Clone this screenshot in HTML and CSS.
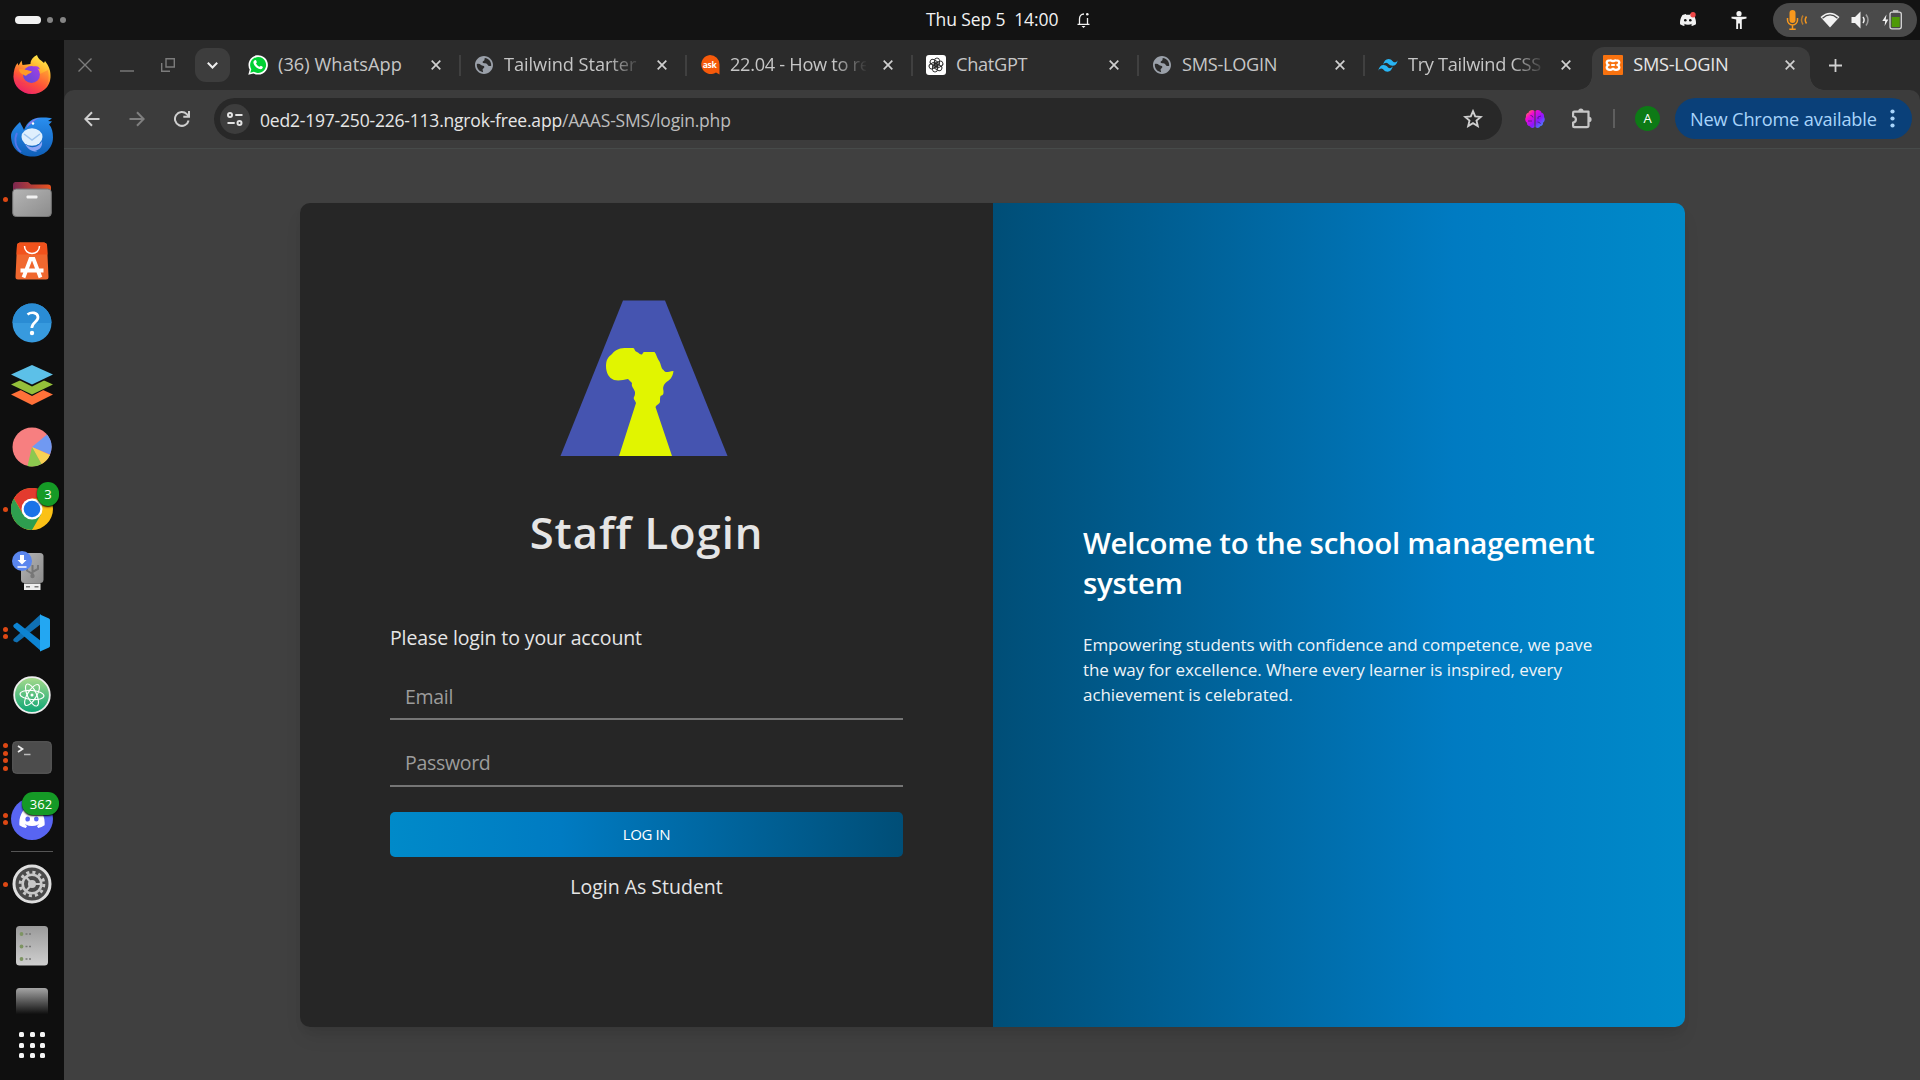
FILE: index.html
```
<!DOCTYPE html>
<html lang="en">
<head>
<meta charset="utf-8">
<title>SMS-LOGIN</title>
<link rel="stylesheet" href="styles.css">
</head>
<body>
<svg class="defs" aria-hidden="true">
  <defs>
    <linearGradient id="ff" x1=".8" y1="0" x2=".3" y2="1"><stop offset="0" stop-color="#fff44f"/><stop offset=".35" stop-color="#ffb02e"/><stop offset=".65" stop-color="#ff5a36"/><stop offset="1" stop-color="#e3117f"/></linearGradient>
    <linearGradient id="ffp" x1="1" y1="0" x2="0" y2="1"><stop offset="0" stop-color="#a63de8"/><stop offset="1" stop-color="#5a4bd0"/></linearGradient>
    <linearGradient id="tb" x1="0" y1="0" x2="0" y2="1"><stop offset="0" stop-color="#2a8ff0"/><stop offset="1" stop-color="#0f5fb8"/></linearGradient>
    <linearGradient id="fo" x1="0" y1="0" x2="1" y2="0"><stop offset="0" stop-color="#7c2750"/><stop offset="1" stop-color="#e95420"/></linearGradient>
    <linearGradient id="gr" x1="0" y1="0" x2="1" y2="1"><stop offset="0" stop-color="#b5b5b5"/><stop offset="1" stop-color="#8c8c8c"/></linearGradient>
    <linearGradient id="pg" x1="0" y1="0" x2="0" y2="1"><stop offset="0" stop-color="#9a9a9a"/><stop offset="1" stop-color="#cfcfcf"/></linearGradient>
    <linearGradient id="at" x1="0" y1="0" x2="0" y2="1"><stop offset="0" stop-color="#a8db8c"/><stop offset="1" stop-color="#0aa574"/></linearGradient>
    <linearGradient id="fade" x1="0" y1="0" x2="0" y2="1"><stop offset="0" stop-color="#a5a5a5"/><stop offset="1" stop-color="#101010"/></linearGradient>
    <linearGradient id="br" x1="0" y1="0" x2="1" y2="1"><stop offset="0" stop-color="#ff9a1f"/><stop offset=".28" stop-color="#f40ad0"/><stop offset=".62" stop-color="#8a16ff"/><stop offset="1" stop-color="#28b4f5"/></linearGradient>
    <symbol id="close" viewBox="0 0 10 10"><path d="M.7.7l8.6 8.6M9.3.7L.7 9.3" stroke="currentColor" stroke-width="1.7"/></symbol>
    <symbol id="globe" viewBox="2 2 20 20"><path d="M12 2C6.480 2 2 6.480 2 12s4.480 10 10 10 10-4.480 10-10S17.520 2 12 2zm-1 17.930c-3.950-.49-7-3.850-7-7.930 0-.4 0-.7.1-1.100 1.500-.5 3.400-.2 4.600 1 1.200 1.100 3.300.4 3.700 2 .3 1.500-1.500 1.600-1.900 2.900-.3 1 .5 2 .5 3.130zM17.500 13c-1.500 0-1.500-2-3-2.600-1.500-.5-3.500.3-4-1.100-.5-1.500 1.300-1.500 1.900-2.500.5-.9-.2-1.800.6-2.700 4 .4 7 3.800 7 7.900 0 .3 0 .6-.1.900-.8.4-1.500.1-2.400.1z" fill="#9aa0a9"/></symbol>
    <symbol id="discord" viewBox="0 0 24 18"><path d="M20.300 1.500A20 20 0 0 0 15.400 0l-.7 1.300a18 18 0 0 0-5.400 0L8.600 0a20 20 0 0 0-4.900 1.500C.5 6.200-.3 10.800.1 15.300A20 20 0 0 0 6.100 18l1.300-2-2-1 .5-.4a14 14 0 0 0 12.200 0l.5.4-2 1 1.300 2a20 20 0 0 0 6-2.700c.5-5.200-.9-9.700-3.600-13.800z" fill="currentColor"/></symbol>
  </defs>
</svg>

<header class="topbar">
  <div class="spaces"><i class="space on"></i><i class="space"></i><i class="space"></i></div>
  <div class="clock"><span class="clock-text">Thu Sep 5&nbsp; 14:00</span>
    <svg width="13" height="16" viewBox="0 0 13 16" fill="none" stroke="#f2f2f2" stroke-width="1.300"><path d="M.5 12.400h12M2.500 12V7c0-3 1.600-5 4.500-5M10.500 6v6"/><circle cx="10.300" cy="2.200" r="1.300" fill="#f2f2f2" stroke="none"/><path d="M4.500 14h4l-2 2z" fill="#f2f2f2" stroke="none"/></svg>
  </div>
  <div class="tray">
    <svg class="t-discord" width="16" height="14" viewBox="0 0 16 14"><g color="#f2f2f2"><use href="#discord" x="0" y="2" width="16" height="12"/></g><circle cx="5.300" cy="8.300" r="1.300" fill="#131313"/><circle cx="10.300" cy="8.300" r="1.300" fill="#131313"/><circle cx="13" cy="2.800" r="2.700" fill="#f04747"/></svg>
    <svg class="t-access" width="16" height="18" viewBox="0 0 16 18" fill="#f2f2f2"><circle cx="8" cy="2.700" r="2.600"/><path d="M.5 5.800h15v1.700L10.800 8.500V18H8.900v-5.500H7.100V18H5.200V8.500L.5 7.500z"/></svg>
    <div class="status">
      <svg width="22" height="22" viewBox="0 0 22 22" fill="none" stroke="#f8981d" stroke-width="1.500"><rect x="3.500" y="1" width="6" height="13" rx="3" fill="#f8981d" stroke="none"/><path d="M1.500 9v2a5 5 0 0 0 10 0V9M6.500 16v4M3.300 20.300h6.400"/><path d="M17 6.500q-3 4.500 0 9" opacity=".65"/><path d="M20.500 7.500q-2.500 3.500 0 7"/></svg>
      <svg width="20" height="16" viewBox="0 0 20 16"><path d="M.5 5Q10-3.500 19.500 5L10 15.500z" fill="#f2f2f2"/><path d="M2.500 6.200Q10-.4 17.500 6.200" stroke="#4a4a4a" stroke-width="1.300" fill="none"/></svg>
      <svg width="19" height="18" viewBox="0 0 19 18" fill="none" stroke="#f2f2f2" stroke-width="1.500"><path d="M.5 6H4l5.500-5.500v17L4 12H.5z" fill="#f2f2f2" stroke="none"/><path d="M12 6q2.200 3 0 6"/><path d="M15 3.500q4 5.500 0 11" opacity=".5"/></svg>
      <svg width="20" height="20" viewBox="0 0 20 20"><path d="M4.500 4.500L.3 11h2.900l-.6 5L6.300 9.600H3.700z" fill="#f2f2f2"/><rect x="8" y="2.200" width="11.300" height="16.600" rx="2" fill="none" stroke="#d8d8d8" stroke-width="1.300"/><path d="M11 1h5.300" stroke="#d8d8d8" stroke-width="1.500"/><path d="M9.700 7h8v10h-8z" fill="#4e9a06"/></svg>
    </div>
  </div>
</header>

<div class="desktop">
  <nav class="dock">
    <div class="app"><svg width="38" height="40" viewBox="0 0 38 40"><path d="M24 0c1 4 4 5 7 8l1-2c4 5 6 10 5.500 16.500C37 32 29 39 19 39S.5 31.500.5 21.500C.5 16 2 11 4.500 8l1 2.500L8.500 5.500l1 4.500c3-.5 6-.5 8-1 0-4 3-7.500 6.500-9z" fill="url(#ff)"/><path d="M0 19c2 7 7 10 13 10s13-3 14-10l8-4c3 14-5 24-16 24S.5 31 0 19z" fill="#ff4a3d" opacity=".3"/><circle cx="18.500" cy="19.500" r="8.500" fill="url(#ffp)"/><path d="M6 14c4 0 6 1 8 1l5 1.500c-1 2-4 2-5 3.500-1 1-2 1-3 0-3-1-5-3-5-6z" fill="#ff9a26"/><path d="M21 11.500c3-1 5 0 6 3-2-1-4-1-6-3z" fill="#a63de8"/></svg></div>
    <div class="app"><svg width="42" height="40" viewBox="0 0 42 40"><path d="M0 19c0-5 4-9 9-14 1 3 3 5 4 8 3-8 8-12 17-12.500 4-.3 8 0 11 1l-4 2.500 4 .5-3 3c3 3 4 8 4 13 0 11-9 19-20.500 19S0 32 0 19z" fill="url(#tb)"/><path d="M6 16c-3 6-2 14 4 19" fill="none" stroke="#5576ea" stroke-width="1.800"/><path d="M15 12c2-7 8-11 15-11-6 1-8 4-10 6-2 1-4 3-5 5z" fill="#8d7ae6"/><path d="M14 27c5 5 14 4 17-3 1 6-3 9-7 10 2 1 3 1 4 1-6 0-11-2-14-8z" fill="#8ea6f4"/><ellipse cx="21" cy="20" rx="10.500" ry="8.700" fill="#dfeffd"/><path d="M13 17l8 6 8-6" fill="none" stroke="#9fc5ef" stroke-width="1.500"/><circle cx="22" cy="6.500" r="1.200" fill="#fff"/></svg></div>
    <div class="app"><i class="run"><b></b></i><svg width="40" height="36" viewBox="0 0 40 36"><path d="M3 1h13l3 2.500h17a3 3 0 0 1 3 3V18H1V4a3 3 0 0 1 2-3z" fill="url(#fo)"/><rect x=".7" y="8" width="38.600" height="27.500" rx="3.500" fill="url(#gr)" stroke="#777"/><rect x="14.500" y="14.500" width="11" height="3" rx="1" fill="#f2f2f2"/></svg></div>
    <div class="app"><svg width="34" height="38" viewBox="0 0 34 38"><path d="M5 .5h24a3 3 0 0 1 3 2.500l1.500 32a2.500 2.500 0 0 1-2.500 2.500H3A2.500 2.500 0 0 1 .5 35L2 3A3 3 0 0 1 5 .5z" fill="#f0682f"/><path d="M5 .5h24a3 3 0 0 1 3 2.500l.5 9.500h-31L2 3A3 3 0 0 1 5 .5z" fill="#f1521c"/><path d="M9.500 4c0 10 15 10 15 0" fill="none" stroke="#fff" stroke-width="1.500"/><path d="M8.500 35.500L15.500 17h3l7 18.500M5.500 28.500h23" fill="none" stroke="#fff" stroke-width="3.800"/></svg></div>
    <div class="app"><svg width="40" height="40" viewBox="0 0 40 40"><circle cx="20" cy="20" r="19.500" fill="#379ade"/><path d="M.5 20a19.500 19.500 0 0 1 39 0z" fill="#2a8cd4"/><path d="M15.500 11.500c4-3 10-2 10.500 2.500.4 5-6.200 5-6.200 11" fill="none" stroke="#fff" stroke-width="2.700"/><circle cx="20" cy="30" r="2.200" fill="#fff"/></svg></div>
    <div class="app"><svg width="42" height="40" viewBox="0 0 42 40"><path d="M0 29.500l21-9.500 21 9.500L21 40z" fill="#ff7139"/><path d="M0 20l21-8.500L42 20 21 31z" fill="#0f0f0f"/><path d="M0 19.500l21-9.500 21 9.500L21 29.500z" fill="#94c03a"/><path d="M0 11l21-9 21 9-21 10.500z" fill="#0f0f0f"/><path d="M0 9.500L21 0l21 9.500L21 19.500z" fill="#5cc0e8"/></svg></div>
    <div class="app"><svg width="40" height="40" viewBox="0 0 40 40"><circle cx="20" cy="20" r="19.500" fill="#f77f80"/><path d="M20 20L35 7.500A19.500 19.500 0 0 1 38 27.500z" fill="#7099f2"/><path d="M20 20l18 8a20 20 0 0 1-8.500 9.200z" fill="#f7d153"/><path d="M20 20l9.500 17a20 20 0 0 1-14 2z" fill="#8cc94f"/></svg></div>
    <div class="app"><i class="run"><b></b></i><svg width="42" height="42" viewBox="0 0 42 42"><circle cx="21" cy="21" r="21" fill="#fbc116"/><path d="M2.800 10.500A21 21 0 0 1 39.200 10.500H21L12 26z" fill="#e33b2e"/><path d="M2.800 10.500A21 21 0 0 0 21 42l9.100-15.700H12z" fill="#2e9e4f"/><circle cx="21" cy="21" r="10.500" fill="#fff"/><circle cx="21" cy="21" r="8.300" fill="#1a73e8"/></svg><span class="badge one">3</span></div>
    <div class="app usb"><svg width="32" height="40" viewBox="0 0 32 40"><rect x="9" y="2" width="22.500" height="30" rx="3.500" fill="url(#gr)"/><path d="M12 32.500h16.500V39H12z" fill="#eee"/><path d="M14 35h4v1.500h-4zM22.500 35h4v1.500h-4z" fill="#777"/><path d="M20.500 14v11M15 17v2.500l5.500 3.500M26 14v4l-5.500 3" fill="none" stroke="#777" stroke-width="2"/><circle cx="20.500" cy="25" r="2.200" fill="#777"/><circle cx="10" cy="10" r="10" fill="#5a86ee"/><path d="M8 4h4v5h2.500L10 13.500 5.500 9H8zM5.500 15.300h9v1.500h-9z" fill="#fff"/></svg></div>
    <div class="app"><i class="run"><b></b><b></b></i><svg width="38" height="38" viewBox="0 0 38 38"><path d="M4 28.500L28 10V0L1 24.500c-1 1-1 2 0 3z" fill="#1070b3"/><path d="M4 8.500l24 18.500v10L1 13.500c-1-1-1-2 0-3z" fill="#0d84d3"/><path d="M27 .5l9 4a2 2 0 0 1 1 2v25a2 2 0 0 1-1 2l-9 4z" fill="#23a7f2"/></svg></div>
    <div class="app"><svg width="38" height="38" viewBox="0 0 38 38"><circle cx="19" cy="19" r="17.800" fill="url(#at)" stroke="#eee" stroke-width="1.800"/><g fill="none" stroke="#fff" stroke-width="1.100"><ellipse cx="19" cy="19" rx="12" ry="4.500" transform="rotate(5 19 19)"/><ellipse cx="19" cy="19" rx="12" ry="4.500" transform="rotate(65 19 19)"/><ellipse cx="19" cy="19" rx="12" ry="4.500" transform="rotate(122 19 19)"/></g><circle cx="19" cy="19" r="1.500" fill="#fff"/></svg></div>
    <div class="app"><i class="run"><b></b><b></b><b></b><b></b></i><svg width="40" height="33" viewBox="0 0 40 33"><rect x=".7" y=".7" width="38.600" height="31.600" rx="3.500" fill="#4c4c4c" stroke="#5e5e5e"/><path d="M6 5l4.500 3L6 11" fill="none" stroke="#eee" stroke-width="1.700"/><path d="M12 13.500h6.500" stroke="#bbb" stroke-width="1.500"/></svg></div>
    <div class="app"><i class="run"><b></b><b></b></i><svg width="42" height="42" viewBox="0 0 42 42" color="#fff"><circle cx="21" cy="21" r="21" fill="#5865f2"/><use href="#discord" x="8" y="11" width="26" height="19"/><ellipse cx="16.700" cy="21" rx="2.300" ry="2.600" fill="#5865f2"/><ellipse cx="25.300" cy="21" rx="2.300" ry="2.600" fill="#5865f2"/></svg><span class="badge many">362</span></div>
    <hr class="dock-line">
    <div class="app"><i class="run"><b></b></i><svg width="40" height="40" viewBox="0 0 40 40"><circle cx="20" cy="20" r="18" fill="#4a4a4a" stroke="#dedede" stroke-width="3"/><circle cx="20" cy="20" r="11.800" fill="none" stroke="#c8c8c8" stroke-width="3" stroke-dasharray="3.090 3.090"/><circle cx="20" cy="20" r="9.300" fill="none" stroke="#c8c8c8" stroke-width="2.600"/><circle cx="20" cy="20" r="4" fill="#c8c8c8"/><path d="M20 20L14 13M20 20h9M20 20l-6 7" stroke="#c8c8c8" stroke-width="2"/></svg></div>
    <div class="app"><svg width="32" height="40" viewBox="0 0 32 40"><rect width="32" height="39.500" rx="3.500" fill="url(#pg)"/><g fill="#7d9462"><circle cx="5.500" cy="8" r="1.900"/><circle cx="5.500" cy="20.500" r="1.900"/><circle cx="5.500" cy="33" r="1.900"/></g><path d="M9.500 8h5.500M9.500 20.500h5.500M9.500 33h5.500" stroke="#777" stroke-width="1.700" stroke-dasharray="2 1.500"/></svg></div>
    <div class="app cut"><svg width="32" height="26" viewBox="0 0 32 26"><path d="M0 26V3.500A3.500 3.500 0 0 1 3.500 0h25A3.500 3.500 0 0 1 32 3.500V26z" fill="url(#fade)"/></svg></div>
    <div class="grid"><i></i><i></i><i></i><i></i><i></i><i></i><i></i><i></i><i></i></div>
  </nav>

  <main class="browser">
    <div class="tabstrip">
      <div class="winbtns">
        <svg width="14" height="14" viewBox="0 0 14 14" fill="none" stroke="#7c7c7c" stroke-width="1.400"><path d="M.5.500l13 13M13.500.5l-13 13"/></svg>
        <svg width="14" height="14" viewBox="0 0 14 14"><path d="M0 13h14" stroke="#7c7c7c" stroke-width="1.400"/></svg>
        <svg width="14" height="14" viewBox="0 0 14 14" fill="none" stroke="#7c7c7c" stroke-width="1.400"><path d="M5 .7h8.300V9H5zM.7 5v8.300H9"/></svg>
      </div>
      <div class="tabmenu"><svg width="11" height="7" viewBox="0 0 11 7" fill="none" stroke="#eee" stroke-width="2"><path d="M.8.8l4.700 4.700L10.200.8"/></svg></div>
      <div class="tabs">
        <div class="tab"><svg class="fav" viewBox="0 0 20 20"><path d="M.3 19.700l1.400-5.100A9.700 9.700 0 1 1 5.500 18.400z" fill="#fff"/><path d="M2.300 17.700l1-3.500a8 8 0 1 1 2.600 2.600z" fill="#00d034"/><path d="M6.800 5.200c.7-.4 1.200-.2 1.400.4l.6 1.500c.1.500-.7 1-.8 1.400.8 1.600 2 2.600 3.500 3.300.5-.1.900-1 1.400-1l1.700.9c.6.500-.1 2.400-1.900 2.500-3.500 0-7.300-3.800-7.300-6.900 0-.9.700-1.700 1.400-2.100z" fill="#fff"/></svg><span class="t-wide">(36) WhatsApp</span><svg class="x"><use href="#close"/></svg></div>
        <div class="tab"><svg class="fav small"><use href="#globe"/></svg><span class="clip t-starter">Tailwind Starter T</span><svg class="x"><use href="#close"/></svg></div>
        <div class="tab"><svg class="fav" viewBox="0 0 20 20"><path d="M10 0a9.500 9.500 0 0 1 9.500 9.500V19.600L16 17.400A9.500 9.500 0 1 1 10 0z" fill="#f65a0b"/><text x="9.600" y="12.500" text-anchor="middle" class="ask">ask</text></svg><span class="clip">22.04 - How to re</span><svg class="x"><use href="#close"/></svg></div>
        <div class="tab"><svg class="fav" viewBox="0 0 20 20"><rect width="20" height="20" rx="3" fill="#fff"/><g fill="none" stroke="#222" stroke-width=".9"><rect x="8.500" y="3" width="5" height="8.500" rx="2.500"/><rect x="8.500" y="3" width="5" height="8.500" rx="2.500" transform="rotate(60 10 10)"/><rect x="8.500" y="3" width="5" height="8.500" rx="2.500" transform="rotate(120 10 10)"/><rect x="8.500" y="3" width="5" height="8.500" rx="2.500" transform="rotate(180 10 10)"/><rect x="8.500" y="3" width="5" height="8.500" rx="2.500" transform="rotate(240 10 10)"/><rect x="8.500" y="3" width="5" height="8.500" rx="2.500" transform="rotate(300 10 10)"/></g></svg><span>ChatGPT</span><svg class="x"><use href="#close"/></svg></div>
        <div class="tab"><svg class="fav small"><use href="#globe"/></svg><span>SMS-LOGIN</span><svg class="x"><use href="#close"/></svg></div>
        <div class="tab"><svg class="fav" viewBox="0 0 20 20" fill="#28b5f4"><path d="M5 10Q6.300 4 10.500 4c3.700 0 4 3.300 6.200 3.300 1.300 0 2.300-.7 3.100-2.100Q18.500 10.700 14.500 10.700c-3.800 0-4-3-6.300-3-1.400 0-2.400.8-3.200 2.300z"/><path d="M.2 15.800Q1.500 10 5.600 10c3.700 0 4 3.200 6.200 3.200 1.300 0 2.300-.7 3.100-2.100Q13.600 16.700 9.600 16.700c-3.800 0-4-3.200-6.200-3.200-1.400 0-2.400.8-3.200 2.300z"/></svg><span class="clip">Try Tailwind CSS</span><svg class="x"><use href="#close"/></svg></div>
        <div class="tab active"><svg class="fav" viewBox="0 0 20 20"><rect width="20" height="20" rx="1" fill="#f8720f"/><path d="M7 5.300c2-.1 3 1.300 3 2 0-.7 1-2.100 3-2 2.200 0 3.300 1 3.300 2.300 0 1-.7 1.900-1.500 2.400.8.500 1.500 1.300 1.500 2.300 0 1.400-1.100 2.500-3.300 2.500-2 0-3-1.300-3-2 0 .7-1 2-3 2-2.200 0-3.300-1.100-3.300-2.500 0-1 .7-1.800 1.500-2.300-.8-.5-1.500-1.400-1.500-2.400C3.700 6.300 4.800 5.300 7 5.300z" fill="none" stroke="#fff" stroke-width="2.300"/><path d="M8.200 10h3.600" stroke="#fff" stroke-width="2"/></svg><span>SMS-LOGIN</span><svg class="x"><use href="#close"/></svg></div>
      </div>
      <svg class="plus" width="13" height="13" viewBox="0 0 13 13" stroke="#d0d0d0" stroke-width="1.800"><path d="M6.500 0v13M0 6.500h13"/></svg>
    </div>

    <div class="toolbar">
      <div class="navbtns">
        <svg width="16" height="16" viewBox="0 0 16 16" fill="none" stroke="#cfcfcf" stroke-width="2"><path d="M15.500 8H1.800M8 1.200L1.300 8 8 14.800"/></svg>
        <svg width="16" height="16" viewBox="0 0 16 16" fill="none" stroke="#7f7f7f" stroke-width="2"><path d="M.5 8h13.700M8 1.200L14.700 8 8 14.800"/></svg>
        <svg width="16" height="16" viewBox="0 0 16 16" fill="none" stroke="#cfcfcf" stroke-width="2"><path d="M14.600 9.500A6.900 6.900 0 1 1 12.800 3.100L14.800 5.200"/><path d="M15 0v5.800H9.300"/></svg>
      </div>
      <div class="omnibox">
        <div class="site"><svg width="16" height="14" viewBox="0 0 16 14" fill="none" stroke="#e3e3e3" stroke-width="2"><circle cx="3" cy="3" r="2"/><path d="M8.300 3H15.500M.5 11H7.700"/><circle cx="12.500" cy="11" r="2"/></svg></div>
        <div class="url">0ed2-197-250-226-113.ngrok-free.app<span class="path">/AAAS-SMS/login.php</span></div>
        <svg width="20" height="19" viewBox="0 0 20 19" fill="none" stroke="#cfcfcf" stroke-width="1.900"><path d="M10 2.200l2.200 5.200 5.600.5-4.300 3.700 1.300 5.500L10 14.200l-4.800 2.900 1.300-5.500L2.200 7.900l5.600-.5z"/></svg>
      </div>
      <svg class="brain" width="20" height="20" viewBox="0 0 20 20"><path d="M9.500 2v16c-1.500 1.500-4 1-4.500-.7-2 0-3.300-1.600-3-3.500C0 12.500-.2 9.500 1 8 .5 5.500 2 4 3.500 3.700 4 1 8 0 9.500 2zM10.500 2v16c1.500 1.500 4 1 4.500-.7 2 0 3.300-1.600 3-3.500 2-1.300 2.200-4.300 1-5.800.5-2.500-1-4-2.500-4.300C16 1 12 0 10.500 2z" fill="url(#br)"/><path d="M5.500 6.500q2.500 0 2.500 2M3 12h4M16 7l-3 1v2M12.500 13q2.500 0 3 2" fill="none" stroke="#4a1480" stroke-width=".8"/></svg>
      <svg class="puzzle" width="22" height="22" viewBox="0 0 22 22" fill="none" stroke="#c6c6c6" stroke-width="2.200"><path d="M3.300 3.600H17.500V17.500a1.700 1.700 0 0 1-1.700 1.700H3.300a1.200 1.200 0 0 1-1.200-1.200V14.500q2.800-.3 2.800-3t-2.800-3V4.800a1.200 1.200 0 0 1 1.200-1.200z" stroke-linejoin="round"/><path d="M7.300 3a2.600 2.600 0 0 1 5.200 0zM18 8.800a2.600 2.600 0 0 1 0 5.200z" fill="#c6c6c6" stroke="none"/></svg>
      <i class="divider"></i>
      <span class="avatar">A</span>
      <div class="update"><span>New Chrome available</span><svg width="5" height="19" viewBox="0 0 5 19" fill="#a8d4fb"><circle cx="2.500" cy="2.500" r="2.100"/><circle cx="2.500" cy="9.500" r="2.100"/><circle cx="2.500" cy="16.500" r="2.100"/></svg></div>
    </div>

    <section class="page">
      <div class="card">
        <form class="login">
          <svg class="logo" width="168" height="156" viewBox="0 0 168 156"><path d="M63 .5h42L167.500 156H.5z" fill="#4554b0"/><path d="M46 66c0-6 2-9 6-12 4-5 8-6 15-6h6c2 0 1 3 4 4 2 1 3 2.500 4.500 2.500 1.500 0 1-2.500 3-2.500h10c2 2 2 5 4 8 3 4 2 8 5 10 2 3 3 2 10 1-1 7-4 9-7 11-3 3-4 5-3 9 0 3 0 4-3 5-1 3 0 6-1 7-2 2-3 2-4 4L112 156H59l17-53c-1-3-3-4-2-6 1-2 1-3 1-5-1-4-4-5-3-9l-4-4c-5 1-9 2-14 1-5-2-8-7-8-14z" fill="#e1f500"/></svg>
          <h1>Staff Login</h1>
          <p class="hint">Please login to your account</p>
          <div class="field">Email</div>
          <div class="field password">Password</div>
          <button type="button">LOG IN</button>
          <a class="student">Login As Student</a>
        </form>
        <aside class="welcome">
          <h2>Welcome to the school management system</h2>
          <p>Empowering students with confidence and competence, we pave the way for excellence. Where every learner is inspired, every achievement is celebrated.</p>
        </aside>
      </div>
    </section>
  </main>
</div>
</body>
</html>
```
FILE: styles.css
```
* { box-sizing: border-box; margin: 0; padding: 0; }
body { width: 1920px; height: 1080px; overflow: hidden; background: #131313; color: #e5e5e5; font-family: "Open Sans", "Noto Sans", sans-serif; font-size: 18px; }
svg { display: block; flex: none; }
.defs { width: 0; height: 0; position: absolute; }

/* system bar */
.topbar { height: 40px; background: #131313; display: grid; grid-template-columns: 926px 1fr auto; align-items: center; }
.spaces { display: flex; align-items: center; gap: 7px; padding-left: 15px; }
.space { width: 6px; height: 6px; border-radius: 3px; background: #858585; }
.space.on { width: 26px; height: 8px; border-radius: 4px; background: #f2f2f2; margin-right: -1px; }
.clock { display: flex; align-items: center; gap: 19px; color: #f2f2f2; font-size: 17.5px; letter-spacing: -.11px; line-height: 38px; }
.clock-text { white-space: pre; margin-top: -2px; }
.tray { display: flex; align-items: center; padding-right: 3px; height: 40px; }
.t-access { margin: 0 26px 0 35px; }
.t-discord { margin-top: -2px; }
.status { display: flex; align-items: center; width: 144px; height: 34px; margin-top: -1px; border-radius: 17px; background: #4a4a4a; padding: 0 15px 0 13px; justify-content: space-between; }

.desktop { display: flex; height: 1040px; }

/* dock */
.dock { width: 64px; background: #0f0f0f; padding-top: 4px; display: flex; flex-direction: column; }
.app { height: 62px; flex: none; position: relative; display: flex; align-items: center; justify-content: center; }
.app.usb { padding: 0 8px 0 0; }
.app.cut { height: 37px; align-items: flex-end; }
.run { position: absolute; left: 3px; top: 0; height: 62px; display: flex; flex-direction: column; justify-content: center; gap: 2.800px; }
.run b { width: 5px; height: 5px; border-radius: 50%; background: #dd4814; }
.badge { position: absolute; background: #159a26; color: #fff; font-size: 13px; text-align: center; box-shadow: 0 1px 2px #000; }
.badge.one { left: 37px; top: 4px; width: 22px; height: 24px; line-height: 24px; border-radius: 11px; }
.badge.many { left: 22px; top: 4px; width: 37px; height: 23px; line-height: 24px; border-radius: 11px; padding-left: 1px; }
.dock-line { flex: none; width: 42px; height: 1px; border: 0; background: #555; margin: 1px auto; }
.grid { display: grid; grid-template-columns: repeat(3, 5px); gap: 5.500px; justify-content: center; margin-top: 18px; }
.grid i { height: 5px; border-radius: 1.500px; background: #f5f5f5; }

/* browser */
.browser { flex: 1; background: #2b2b2b; display: flex; flex-direction: column; }
.tabstrip { height: 50px; display: flex; align-items: center; }
.winbtns { display: flex; gap: 27.500px; padding-left: 14px; }
.tabmenu { width: 35px; height: 34px; border-radius: 11px; background: #3d3d3d; margin: 0 4px 0 20px; display: flex; align-items: center; justify-content: center; }
.tabs { display: flex; align-self: flex-end; height: 43px; }
.tab { position: relative; width: 226px; padding: 0 19px 7px 14px; display: flex; align-items: center; font-size: 18.200px; letter-spacing: -.3px; color: #c6c6c6; line-height: 34px; }
.tab span { width: 136px; margin-left: 10px; padding-bottom: 2px; white-space: nowrap; }
.tab .t-wide { letter-spacing: .05px; }
.tab .t-starter { letter-spacing: -.05px; }
.tab .clip { -webkit-mask-image: linear-gradient(90deg, #000 104px, transparent 138px); mask-image: linear-gradient(90deg, #000 104px, transparent 138px); }
.fav { width: 20px; height: 20px; }
.fav.small { width: 18px; height: 18px; margin: 0 1px; }
.ask { font: 700 8.500px "Open Sans", sans-serif; letter-spacing: -.3px; fill: #fff; }
.x { width: 10px; height: 10px; margin-left: auto; color: #d0d0d0; }
.tab:not(.active):not(:nth-child(6))::after { content: ""; position: absolute; right: -1px; top: 8px; width: 2px; height: 21px; background: #404040; }
.tab.active { width: 218px; margin-left: 2.300px; padding: 0 15px 7px 11px; background: #3c3c3c; border-radius: 12px 12px 0 0; color: #e6e6e6; }
.tab.active::before, .tab.active::after { content: ""; position: absolute; bottom: 0; width: 14px; height: 14px; }
.tab.active::before { left: -14px; background: radial-gradient(circle at 0 0, transparent 13.500px, #3c3c3c 14px); }
.tab.active::after { right: -14px; background: radial-gradient(circle at 100% 0, transparent 13.500px, #3c3c3c 14px); }
.plus { margin-left: 19px; }

.toolbar { height: 59px; background: #3c3c3c; border-bottom: 1px solid #474b4a; border-radius: 10px 10px 0 0; display: flex; align-items: center; padding: 0 8px 1px 20px; }
.navbtns { display: flex; gap: 29px; width: 130px; }
.omnibox { width: 1288px; height: 42px; border-radius: 21px; background: #282828; display: flex; align-items: center; padding: 0 19px 0 6px; }
.site { width: 30px; height: 30px; border-radius: 50%; background: #3d3d3d; display: flex; align-items: center; justify-content: center; }
.url { flex: 1; margin-left: 10px; font-size: 17.500px; letter-spacing: -.2px; line-height: 40px; padding-top: 2px; color: #e6e6e6; }
.path { color: #bdbdbd; }
.brain { margin-left: 23px; }
.puzzle { margin-left: 26px; }
.divider { width: 2px; height: 19px; background: #5e5e5e; margin: 0 20px; }
.avatar { width: 25px; height: 25px; border-radius: 50%; background: #0d7a16; color: #fff; font-size: 13px; line-height: 25px; text-align: center; }
.update { flex: none; margin-left: auto; width: 237px; height: 41px; border-radius: 21px; background: #0a4079; display: flex; align-items: center; justify-content: space-between; padding: 0 17px 0 15px; color: #a8d4fb; font-size: 18.200px; letter-spacing: -.16px; line-height: 40px; }

/* login page */
.page { flex: 1; background: #404040; padding: 54px 0 0 236px; }
.card { width: 1385px; height: 824px; border-radius: 10px; overflow: hidden; display: grid; grid-template-columns: 693px 1fr; box-shadow: 0 12px 19px -4px rgba(0,0,0,.1), 0 5px 8px -2px rgba(0,0,0,.05); }
.login { background: #262626; padding: 97px 90px 0; display: flex; flex-direction: column; }
.logo { align-self: center; margin-left: -5px; }
h1 { margin-top: 49px; font-size: 43.500px; line-height: 56px; font-weight: 600; letter-spacing: .95px; text-align: center; }
.hint { margin-top: 62px; font-size: 19.500px; line-height: 30px; letter-spacing: -.12px; }
.field { height: 46px; margin-top: 21px; padding-left: 15px; border-bottom: 2px solid #757575; font-size: 19.500px; line-height: 45px; letter-spacing: -.3px; color: #9c9c9c; }
.field.password { line-height: 44px; }
button { margin-top: 25px; height: 45px; border: 0; border-radius: 5px; background: linear-gradient(90deg, #008ac9, #007bc2, #00649c, #004e77); color: #fff; font: 500 15px/45px "Open Sans", sans-serif; letter-spacing: -.4px; }
.student { margin-top: 15px; font-size: 19.500px; line-height: 30px; text-align: center; }
.welcome { background: linear-gradient(90deg, #004e77, #00649c, #007bc2, #008ac9); color: #fff; padding: 0 90px; display: flex; flex-direction: column; justify-content: center; }
h2 { font-size: 29.500px; line-height: 40px; font-weight: 600; letter-spacing: -.29px; }
.welcome p { margin-top: 29px; font-size: 17px; line-height: 25px; letter-spacing: -.07px; color: #eef4f8; }
```
